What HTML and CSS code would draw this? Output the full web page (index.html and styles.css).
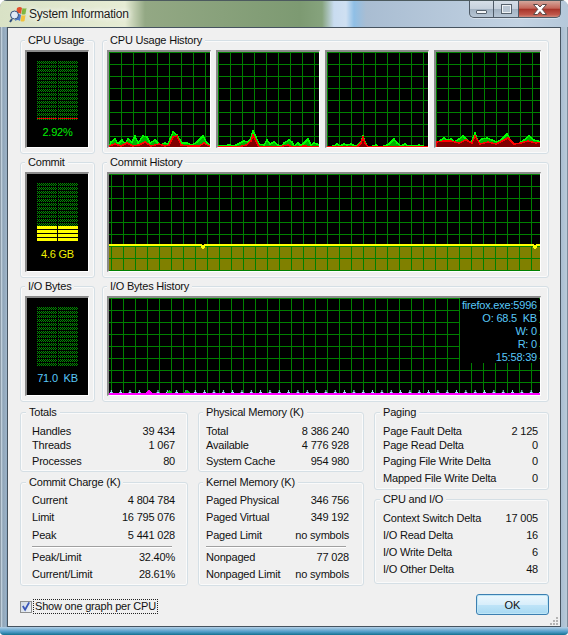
FILE: index.html
```html
<!DOCTYPE html>
<html>
<head>
<meta charset="utf-8">
<title>System Information</title>
<link rel="stylesheet" href="styles.css">
</head>
<body>
<div class="window">
  <div class="titlebar">
    <svg class="appicon" width="18" height="17" viewBox="0 0 18 17">
      <path d="M8 2 Q11 0 13 2 L12 8 Q10 6 7 8Z" fill="#e2502c"/>
      <path d="M13.5 2 Q15.5 3 17.5 2 L16.5 8 Q14.5 9 12.5 8Z" fill="#7cb53c"/>
      <path d="M7 9 Q10 7 12 9 L11 15 Q9 13 6 15Z" fill="#4a78c8"/>
      <path d="M12.5 9 Q14.5 10 16.5 9 L15.5 15 Q13.5 16 11.5 15Z" fill="#f2c23a"/>
      <circle cx="5.5" cy="9" r="4" fill="#dfeaf6" stroke="#33507c"/>
      <path d="M3 13 L1 16" stroke="#33507c" stroke-width="2"/>
    </svg>
    <span class="title">System Information</span>
    <div class="caption">
      <div class="capbtn capmin"><i></i></div>
      <div class="capbtn capmax"><i></i></div>
      <div class="capbtn capclose">
        <svg width="16" height="11" viewBox="0 0 16 11"><path d="M1.5 .5 H5.5 L8 3 L10.5 .5 H14.5 L10.2 5.3 L14.5 10.5 H10.5 L8 7.6 L5.5 10.5 H1.5 L5.8 5.3Z" fill="#fff" stroke="#5a4a48"/></svg>
      </div>
    </div>
  </div>

  <div class="client">
    <div class="graphrow">
      <div class="group">
        <div class="legend">CPU Usage</div>
        <div class="meter h98">
          <div class="bars"><div class="bar"><b class="fill fill-cpu"></b></div><div class="bar"><b class="fill fill-cpu"></b></div></div>
          <div class="reading green">2.92%</div>
        </div>
      </div>
      <div class="group">
        <div class="legend">CPU Usage History</div>
        <div class="cpus">
          <div class="graph h98">
            <svg>
              <polygon class="total" points="0,96 0,95 2,90 6,87 9,92 13,88 16,92 19,87 23,90 26,84 29,91 34,84 38,85 41,91 46,88 51,93 56,91 59,92 64,80 68,83 73,91 78,91 83,93 88,90 94,84 98,91 102,94 102,96"/>
              <polygon class="kernel" points="0,96 0,94 6,92 12,94 18,91 24,94 30,93 36,90 42,94 50,92 56,94 60,93 64,85 68,84 72,93 80,94 90,94 95,91 102,95 102,96"/>
            </svg>
          </div>
          <div class="graph h98">
            <svg>
              <polygon class="total" points="0,96 0,94 12,93 16,94 22,91 26,89 30,90 33,86 35,79 38,85 41,92 46,93 49,88 52,92 56,90 60,93 64,94 66,91 71,88 74,90 76,94 80,91 83,94 86,91 90,87 93,93 96,91 99,92 102,94 102,96"/>
              <polygon class="kernel" points="0,96 0,95 20,95 28,93 33,89 35,83 38,89 41,95 60,95 70,93 74,95 88,94 92,95 102,95 102,96"/>
            </svg>
          </div>
          <div class="graph h98">
            <svg>
              <polygon class="total" points="0,96 0,95 7,94 10,92 13,94 17,92 20,93 24,92 28,94 31,93 34,90 36,84 38,90 41,95 46,94 49,93 52,95 58,94 62,92 67,87 70,91 74,94 78,92 81,94 88,94 92,93 95,94 101,95 102,96"/>
              <polygon class="kernel" points="0,96 0,95 30,95 34,91 36,85 38,91 41,95 102,95 102,96"/>
            </svg>
          </div>
          <div class="graph h98">
            <svg>
              <polygon class="total" points="0,96 0,91 5,88 8,86 11,88 15,87 18,90 23,87 27,84 31,88 35,91 39,81 42,90 46,87 51,86 56,88 61,90 65,88 71,82 76,91 80,93 85,90 88,88 93,84 98,88 105,90 105,96"/>
              <polygon class="kernel" points="0,96 0,90 8,89 15,89 23,91 30,88 36,91 39,84 44,92 52,90 60,92 66,89 72,86 78,92 85,91 92,89 100,91 105,90 105,96"/>
            </svg>
          </div>
        </div>
      </div>
    </div>

    <div class="graphrow">
      <div class="group">
        <div class="legend">Commit</div>
        <div class="meter h100">
          <div class="bars"><div class="bar"><b class="fill fill-commit"></b></div><div class="bar"><b class="fill fill-commit"></b></div></div>
          <div class="reading yellow">4.6 GB</div>
        </div>
      </div>
      <div class="group">
        <div class="legend">Commit History</div>
        <div class="graph h100 grid-wide commit">
          <svg><polyline class="commitline" points="0,71 92,71 94,74 96,71 424,71 426,74 428,71 432,71"/></svg>
        </div>
      </div>
    </div>

    <div class="graphrow">
      <div class="group">
        <div class="legend">I/O Bytes</div>
        <div class="meter h100">
          <div class="bars"><div class="bar"></div><div class="bar"></div></div>
          <div class="reading cyan">71.0  KB</div>
        </div>
      </div>
      <div class="group">
        <div class="legend">I/O Bytes History</div>
        <div class="graph h100 grid-wide">
          <svg>
            <defs>
              <pattern id="ticks" width="9.33" height="5" patternUnits="userSpaceOnUse">
                <path d="M1 5 L2.5 2 L4 5Z" fill="#9ff4ff"/>
              </pattern>
            </defs>
            <rect x="0" y="90" width="432" height="5" fill="url(#ticks)"/>
            <path d="M37 95 L40 91 L43 95Z" fill="#ff00ff"/>
            <path d="M57 95 L60 92 L63 95Z" fill="#00c000"/>
            <path d="M76 95 L78 92 L81 95Z" fill="#00c000"/>
            <line class="ioline" x1="0" y1="95.5" x2="432" y2="95.5"/>
          </svg>
          <div class="tip">
            <div>firefox.exe:5996</div>
            <div>O: 68.5  KB</div>
            <div>W: 0</div>
            <div>R: 0</div>
            <div>15:58:39</div>
          </div>
        </div>
      </div>
    </div>

    <div class="stats">
      <div class="col">
        <div class="group box-totals pad-a">
          <div class="legend">Totals</div>
          <div class="row"><span>Handles</span><span>39 434</span></div>
          <div class="row near"><span>Threads</span><span>1 067</span></div>
          <div class="row mid"><span>Processes</span><span>80</span></div>
        </div>
        <div class="group box-charge pad-a">
          <div class="legend">Commit Charge (K)</div>
          <div class="row"><span>Current</span><span>4 804 784</span></div>
          <div class="row"><span>Limit</span><span>16 795 076</span></div>
          <div class="row wide"><span>Peak</span><span>5 441 028</span></div>
          <div class="rule"></div>
          <div class="row"><span>Peak/Limit</span><span>32.40%</span></div>
          <div class="row"><span>Current/Limit</span><span>28.61%</span></div>
        </div>
      </div>
      <div class="col">
        <div class="group box-totals pad-b">
          <div class="legend">Physical Memory (K)</div>
          <div class="row"><span>Total</span><span>8 386 240</span></div>
          <div class="row near"><span>Available</span><span>4 776 928</span></div>
          <div class="row mid"><span>System Cache</span><span>954 980</span></div>
        </div>
        <div class="group box-charge pad-b">
          <div class="legend">Kernel Memory (K)</div>
          <div class="row"><span>Paged Physical</span><span>346 756</span></div>
          <div class="row"><span>Paged Virtual</span><span>349 192</span></div>
          <div class="row wide"><span>Paged Limit</span><span>no symbols</span></div>
          <div class="rule"></div>
          <div class="row"><span>Nonpaged</span><span>77 028</span></div>
          <div class="row"><span>Nonpaged Limit</span><span>no symbols</span></div>
        </div>
      </div>
      <div class="col col-right">
        <div class="group box-paging pad-c">
          <div class="legend">Paging</div>
          <div class="row"><span>Page Fault Delta</span><span>2 125</span></div>
          <div class="row near"><span>Page Read Delta</span><span>0</span></div>
          <div class="row mid"><span>Paging File Write Delta</span><span>0</span></div>
          <div class="row"><span>Mapped File Write Delta</span><span>0</span></div>
        </div>
        <div class="group box-io pad-c">
          <div class="legend">CPU and I/O</div>
          <div class="row"><span>Context Switch Delta</span><span>17 005</span></div>
          <div class="row"><span>I/O Read Delta</span><span>16</span></div>
          <div class="row"><span>I/O Write Delta</span><span>6</span></div>
          <div class="row"><span>I/O Other Delta</span><span>48</span></div>
        </div>
      </div>
    </div>

    <div class="footer">
      <label class="check">
        <span class="checkbox">
          <svg width="11" height="11" viewBox="0 0 11 11"><path d="M2 5 L4.5 9 L9 1" fill="none" stroke="#3a56b8" stroke-width="2"/></svg>
        </span>
        <span class="checktext">Show one graph per CPU</span>
      </label>
      <button class="okbtn" type="button">OK</button>
    </div>
    <svg class="grip" width="9" height="9" viewBox="0 0 9 9">
      <path d="M6 0h2v2h-2zM3 3h2v2h-2zM6 3h2v2h-2zM0 6h2v2h-2zM3 6h2v2h-2zM6 6h2v2h-2z" fill="#b4b4b4"/>
    </svg>
  </div>
  <div class="bottomedge"></div>
</div>
</body>
</html>
```

FILE: styles.css
```css
html, body {
  margin: 0;
  padding: 0;
  background: #fff;
}
body {
  font-family: "Liberation Sans", Arial, sans-serif;
  font-size: 11px;
  letter-spacing: -0.2px;
  color: #111;
}
.window {
  width: 568px;
  height: 635px;
  box-sizing: border-box;
  border-radius: 7px 7px 4px 4px;
  overflow: hidden;
  display: flex;
  flex-direction: column;
  align-items: center;
  background:
    linear-gradient(90deg, #4f5f6e 0, #cfdce6 1px, #8fa5b8 3px, #9db2c6 6px, transparent 7px),
    linear-gradient(270deg, #3d4d5c 0, #b9cad9 1px, #a9bdd0 7px, transparent 7px),
    linear-gradient(#7c96ae, #a6bdd0 50%, #6f93b4);
}

/* title bar */
.titlebar {
  width: 100%;
  height: 27px;
  flex: none;
  display: flex;
  align-items: flex-start;
  box-sizing: border-box;
  border-top: 1px solid #4c5a5e;
  background:
    linear-gradient(90deg, #d9e2c6 0, #e6ecd4 125px, #93a884 145px, #7d9a72 300px, #86a37d 322px, #c9dcf0 334px, #cfe0f2 346px, #8fbfe6 354px, #a9bdd2 366px, #c2d2e2 520px, #b5c8da 568px);
}
.appicon {
  margin: 5px 0 0 9px;
  flex: none;
}
.title {
  margin: 6px 0 0 2px;
  font-size: 12px;
  color: #1b1b1b;
  text-shadow: 0 0 6px #fff, 0 0 6px #fff;
}
.caption {
  margin-left: auto;
  margin-right: 7px;
  display: flex;
  height: 17px;
  box-shadow: 0 1px 0 #fff6;
  border-radius: 0 0 5px 5px;
}
.capbtn {
  display: flex;
  align-items: center;
  justify-content: center;
  box-sizing: border-box;
  height: 17px;
  border: 1px solid #4e5a66;
  border-top: 0;
  border-left-width: 0;
}
.capmin {
  width: 25px;
  border-left-width: 1px;
  border-radius: 0 0 0 5px;
  background: linear-gradient(#d6dfe8 0, #c5d0dc 50%, #a2b2c2 52%, #b7c6d5);
}
.capmin i {
  display: block;
  width: 11px;
  height: 4px;
  margin-top: 5px;
  box-sizing: border-box;
  background: #f4f6f8;
  border: 1px solid #57636e;
  border-radius: 1px;
}
.capmax {
  width: 25px;
  background: linear-gradient(#d6dfe8 0, #c5d0dc 50%, #a2b2c2 52%, #b7c6d5);
}
.capmax i {
  display: block;
  width: 11px;
  height: 10px;
  box-sizing: border-box;
  background: #b9c6d3;
  border: 2px solid #eef2f5;
  outline: 1px solid #57636e;
  outline-offset: -1px;
}
.capclose {
  width: 42px;
  border-radius: 0 0 5px 0;
  background: linear-gradient(#d4a79c 0, #c4675a 45%, #a8352a 52%, #c0574a 85%, #d08a7c);
}

/* client area */
.client {
  position: relative;
  width: 554px;
  height: 600px;
  flex: none;
  box-sizing: border-box;
  border: 1px solid #46535f;
  background: #f0f0f0;
  padding: 12px 11px 0 12px;
}
.bottomedge {
  width: 100%;
  flex: 1;
  background: linear-gradient(#b4cfe6, #4f9cc8 60%, #14708f);
}
.group {
  border: 1px solid #d5dfe5;
  box-shadow: inset 0 0 0 1px #fafafa;
  border-radius: 3px;
  background: #f0f0f0;
  padding: 0 7px 5px 4px;
}
.legend {
  width: fit-content;
  height: 15px;
  line-height: 15px;
  margin: -8px 0 2px 0;
  padding: 0 3px;
  background: #f0f0f0;
  position: relative;
  white-space: pre;
}
.graphrow {
  display: grid;
  grid-template-columns: 75px 447px;
  column-gap: 7px;
  margin-bottom: 8px;
}
.graphrow .group:first-child {
  padding-right: 5px;
}
.cpus {
  display: flex;
  gap: 5px;
}
.cpus .graph {
  width: 104px;
}
.cpus .graph:last-child {
  flex: 1;
}
.h98 { height: 98px; }
.h100 { height: 100px; }

/* graphs */
.meter, .graph {
  box-sizing: border-box;
  border-style: solid;
  border-width: 2px 1px 1px 2px;
  border-color: #8a8a8a #fff #fff #8a8a8a;
  background-color: #000;
}
.meter {
  padding-top: 9px;
  display: flex;
  flex-direction: column;
  align-items: center;
}
.bars {
  display: flex;
  gap: 1px;
}
.bar {
  width: 20px;
  height: 59px;
  display: flex;
  flex-direction: column;
  justify-content: flex-end;
  background: #000 url("data:image/svg+xml,%3Csvg xmlns='http://www.w3.org/2000/svg' width='2' height='4' shape-rendering='crispEdges'%3E%3Cpath d='M0 0h1v1H0zM1 1h1v1H1zM0 2h1v1H0z' fill='%23009000'/%3E%3C/svg%3E") 0 0 / 2px 4px;
}
.fill {
  display: block;
}
.fill-cpu {
  height: 1px;
  margin-bottom: 1px;
  background: #e00000;
}
.fill-commit {
  height: 16px;
  background: repeating-linear-gradient(#ffff00 0 3px, #000 3px 4px);
}
.reading {
  margin-top: 5px;
  line-height: 14px;
  white-space: pre;
}
.green { color: #00f000; }
.yellow { color: #f0f000; }
.cyan { color: #58c8f8; }

.graph {
  position: relative;
  background-image:
    linear-gradient(#008000 1px, transparent 1px),
    linear-gradient(90deg, #008000 1px, transparent 1px);
  background-size: 12px 12px;
}
.grid-wide {
  background-position: 2px 0;
}
.commit {
  background-image:
    linear-gradient(#008000 1px, transparent 1px),
    linear-gradient(90deg, #008000 1px, transparent 1px),
    linear-gradient(#000 71px, #808000 71px);
  background-size: 12px 12px, 12px 12px, 100% 100%;
  background-position: 2px 0, 2px 0, 0 0;
}
.graph svg {
  display: block;
  width: 100%;
  height: 100%;
  shape-rendering: crispEdges;
}
.total {
  fill: #00b000;
  stroke: #00ff00;
  stroke-width: 1.5;
}
.kernel {
  fill: #800000;
  stroke: #ff0000;
  stroke-width: 1.5;
}
.commitline {
  fill: none;
  stroke: #ffff00;
  stroke-width: 2;
}
.ioline {
  stroke: #ff00ff;
  stroke-width: 2;
}
.tip {
  position: absolute;
  top: 0;
  right: 1px;
  width: 79px;
  height: 65px;
  box-sizing: border-box;
  padding: 1px 2px 0 0;
  background: #000;
  color: #58c8f8;
  text-align: right;
  line-height: 13px;
}
.tip div {
  white-space: pre;
}

/* number tables */
.stats {
  display: grid;
  grid-template-columns: 168px 166px 175px;
  column-gap: 10px;
  margin-top: 10px;
}
.col {
  display: flex;
  flex-direction: column;
  gap: 10px;
}
.col-right {
  gap: 9px;
}
.box-totals { height: 60px; box-sizing: border-box; }
.box-charge { height: 104px; box-sizing: border-box; }
.box-paging { height: 78px; box-sizing: border-box; }
.box-io { height: 85px; box-sizing: border-box; }
.pad-a { padding: 0 12px 0 11px; }
.pad-a .legend { margin-left: -6px; }
.pad-b { padding: 0 14px 0 7px; }
.pad-b .legend { margin-left: -3px; }
.pad-c { padding: 0 10px 0 8px; }
.pad-c .legend { margin-left: -3px; }
.row {
  display: flex;
  justify-content: space-between;
  height: 14px;
  line-height: 14px;
  margin-top: 3px;
  white-space: pre;
}
.legend + .row {
  margin-top: 4px;
}
.box-charge .legend + .row {
  margin-top: 3px;
}
.row.near { margin-top: 0; }
.row.mid { margin-top: 2px; }
.row.wide { margin-top: 4px; }
.rule {
  height: 1px;
  margin: 4px 3px 3px 0;
  background: #a0a0a0;
  box-shadow: 0 1px 0 #fff;
}

/* bottom strip */
.footer {
  display: flex;
  justify-content: space-between;
  align-items: flex-start;
  margin-top: 8px;
  width: 529px;
}
.check {
  display: flex;
  align-items: center;
  gap: 2px;
  margin-top: 6px;
}
.checkbox {
  width: 12px;
  height: 12px;
  box-sizing: border-box;
  border: 1px solid #8e8f8f;
  background: linear-gradient(135deg, #cfd8e4, #eef2f6);
  display: flex;
  align-items: center;
  justify-content: center;
}
.checktext {
  height: 13px;
  line-height: 13px;
  padding: 0 1px;
  outline: 1px dotted #222;
}
.okbtn {
  width: 73px;
  height: 21px;
  padding: 0;
  font: inherit;
  color: #111;
  border: 1px solid #3c7fb1;
  border-radius: 3px;
  box-shadow: inset 0 0 0 1px #bfe6f6;
  background: linear-gradient(#ecf7fd 0, #d8eefb 50%, #bfe4f8 52%, #a8d9f2);
}
.grip {
  position: absolute;
  right: 1px;
  bottom: 0;
}
```
